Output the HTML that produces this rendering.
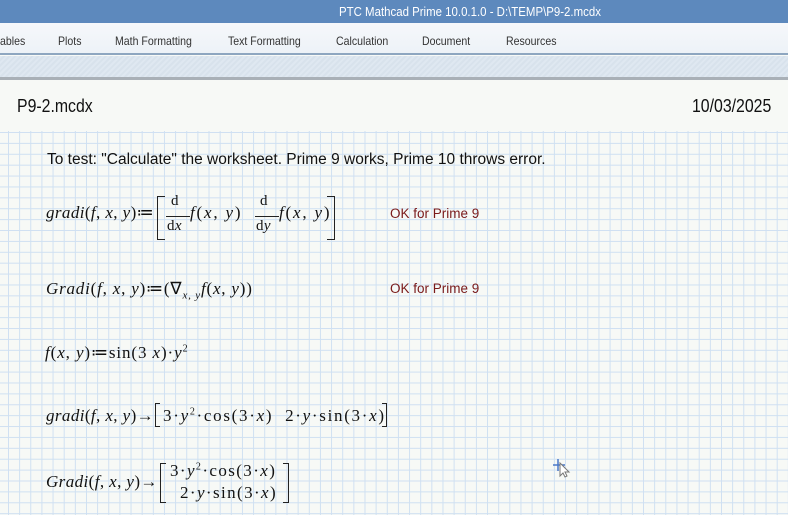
<!DOCTYPE html>
<html><head><meta charset="utf-8"><style>
*{margin:0;padding:0;box-sizing:border-box}
body{width:788px;height:515px;overflow:hidden;position:relative;background:#f7f9f6;font-family:"Liberation Sans",sans-serif}
.a{position:absolute;white-space:nowrap}
#title{left:0;top:0;width:788px;height:23px;background:#5d89bd;color:#fff;font-size:13px}
#ribbon{left:0;top:23px;width:788px;height:32px;background:linear-gradient(#f6f8fb,#edf2f7);border-bottom:2px solid #8ea6c0;font-size:12px;color:#333}
.sq{transform:scaleX(0.88);transform-origin:0 0}
#band{left:0;top:56px;width:788px;height:24px;background:repeating-linear-gradient(135deg,#dfe8f1 0 2px,#d8e2ec 2px 4px);border-bottom:3px solid #a9b0b7}
#grid{left:0;top:131px;width:788px;height:384px;background-color:#f7f9f6;background-image:linear-gradient(90deg,#cfe0f2 1px,transparent 1px),linear-gradient(#cfe0f2 1px,transparent 1px);background-size:11.15px 10.9px;background-position:8px 1px}
.m{font-family:"Liberation Serif",serif;font-size:17px;color:#111;letter-spacing:0.4px}
.i{font-style:italic}
.ok{font-size:13.5px;color:#7a1a1a}
.br{position:absolute;border:1.5px solid #222}
</style></head><body>
<div class="a" id="title"><span class="a sq" style="left:339px;top:4px">PTC Mathcad Prime 10.0.1.0 - D:\TEMP\P9-2.mcdx</span></div>
<div class="a" id="ribbon">
<span class="a sq" style="left:0;top:11px">ables</span>
<span class="a sq" style="left:58px;top:11px">Plots</span>
<span class="a sq" style="left:115px;top:11px">Math Formatting</span>
<span class="a sq" style="left:228px;top:11px">Text Formatting</span>
<span class="a sq" style="left:336px;top:11px">Calculation</span>
<span class="a sq" style="left:422px;top:11px">Document</span>
<span class="a sq" style="left:506px;top:11px">Resources</span>
</div>
<div class="a" id="band"></div>
<div class="a sq" style="left:17px;top:96px;font-size:18px;color:#111">P9-2.mcdx</div>
<div class="a sq" style="left:692px;top:96px;font-size:18px;color:#111">10/03/2025</div>
<div class="a" id="grid"></div>
<div class="a" style="left:47px;top:151px;font-size:15.5px;color:#111">To test: "Calculate" the worksheet. Prime 9 works, Prime 10 throws error.</div>

<div class="a m" style="left:46px;top:203px"><span class="i">gradi</span>(<span class="i">f</span>, <span class="i">x</span>, <span class="i">y</span>)≔</div>
<div class="br" style="left:157px;top:196px;width:8px;height:44px;border-right:none"></div>
<div class="a m" style="left:171px;top:193px;font-size:15px">d</div>
<div class="a" style="left:166px;top:216px;width:24px;border-top:1px solid #222"></div>
<div class="a m" style="left:167px;top:218px;font-size:15px">d<span class="i">x</span></div>
<div class="a m" style="left:190px;top:203px;letter-spacing:1.8px"><span class="i">f</span>(<span class="i">x</span>, <span class="i">y</span>)</div>
<div class="a m" style="left:260px;top:193px;font-size:15px">d</div>
<div class="a" style="left:255px;top:216px;width:24px;border-top:1px solid #222"></div>
<div class="a m" style="left:256px;top:218px;font-size:15px">d<span class="i">y</span></div>
<div class="a m" style="left:279px;top:203px;letter-spacing:1.8px"><span class="i">f</span>(<span class="i">x</span>, <span class="i">y</span>)</div>
<div class="br" style="left:327px;top:196px;width:8px;height:44px;border-left:none"></div>
<div class="a ok" style="left:390px;top:206px">OK for Prime 9</div>

<div class="a m" style="left:46px;top:279px;letter-spacing:0.8px"><span class="i">Gradi</span>(<span class="i">f</span>, <span class="i">x</span>, <span class="i">y</span>)≔(∇<sub class="i" style="font-size:11px">x, y</sub><span class="i">f</span>(<span class="i">x</span>, <span class="i">y</span>))</div>
<div class="a ok" style="left:390px;top:281px">OK for Prime 9</div>

<div class="a m" style="left:45px;top:343px;letter-spacing:0.9px"><span class="i">f</span>(<span class="i">x</span>, <span class="i">y</span>)≔sin(3 <span class="i">x</span>)·<span class="i">y</span><sup style="font-size:10px">2</sup></div>

<div class="a m" style="left:46px;top:406px"><span class="i">gradi</span>(<span class="i">f</span>, <span class="i">x</span>, <span class="i">y</span>)→</div>
<div class="br" style="left:155px;top:403px;width:5px;height:24px;border-right:none"></div>
<div class="a m" style="left:163px;top:406px;letter-spacing:1.7px">3·<span class="i">y</span><sup style="font-size:10px">2</sup>·cos(3·<span class="i">x</span>)&nbsp; 2·<span class="i">y</span>·sin(3·<span class="i">x</span>)</div>
<div class="br" style="left:382px;top:403px;width:5px;height:24px;border-left:none"></div>

<div class="a m" style="left:46px;top:472px"><span class="i">Gradi</span>(<span class="i">f</span>, <span class="i">x</span>, <span class="i">y</span>)→</div>
<div class="br" style="left:160px;top:463px;width:6px;height:40px;border-right:none"></div>
<div class="a m" style="left:170px;top:461px;letter-spacing:1.4px">3·<span class="i">y</span><sup style="font-size:10px">2</sup>·cos(3·<span class="i">x</span>)</div>
<div class="a m" style="left:180px;top:483px;letter-spacing:1.4px">2·<span class="i">y</span>·sin(3·<span class="i">x</span>)</div>
<div class="br" style="left:283px;top:463px;width:6px;height:40px;border-left:none"></div>

<svg class="a" style="left:551px;top:457px" width="22" height="22"><path d="M2 8h12M7 2v12" stroke="#4a78c8" stroke-width="1.5"/><path d="M9 6v13l3-3 2 4 2-1-2-4h4z" fill="#fff" stroke="#777" stroke-width="1"/></svg>
</body></html>
